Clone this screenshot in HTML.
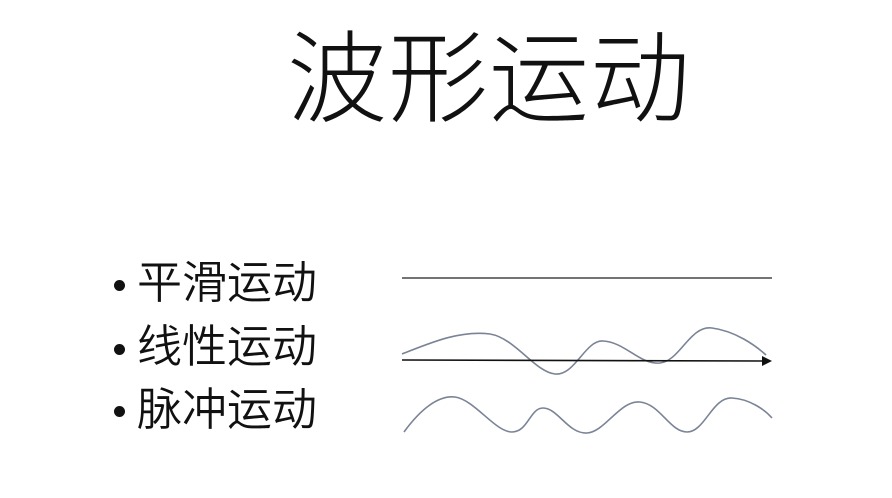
<!DOCTYPE html>
<html><head><meta charset="utf-8"><style>
body{margin:0;width:892px;height:498px;background:#fff;overflow:hidden;position:relative;font-family:"Liberation Sans","Noto Sans CJK SC",sans-serif;color:#111}
.t{position:absolute;line-height:1;white-space:nowrap}
.title{left:287px;top:30px;font-size:100px;letter-spacing:1px;font-weight:300}
.b{font-size:45px;left:137px;font-weight:350}
.dot{position:absolute;width:11px;height:11px;border-radius:50%;background:#111;left:114px}
</style></head><body>
<div class="t title">波形运动</div>
<div class="dot" style="top:280px"></div>
<div class="t b" style="top:260px">平滑运动</div>
<div class="dot" style="top:344px"></div>
<div class="t b" style="top:324px">线性运动</div>
<div class="dot" style="top:406px"></div>
<div class="t b" style="top:387px">脉冲运动</div>
<svg width="892" height="498" style="position:absolute;left:0;top:0">
<line x1="402" y1="278" x2="772" y2="278" stroke="#222" stroke-width="1.3"/>
<path d="M402 354 C430 343,460 330,490 334 C515 338,535 372,555 374 C575 376,585 340,603 341 C625 342,640 365,660 363 C680 361,690 325,712 328 C735 331,755 345,766 355" fill="none" stroke="#7a8496" stroke-width="1.6"/>
<line x1="402" y1="360" x2="764" y2="361" stroke="#111" stroke-width="1.6"/>
<polygon points="772,361 762,356 762,366" fill="#111"/>
<path d="M404 432 C420 410,438 395,455 397 C475 400,495 432,512 432 C528 432,530 408,543 408 C558 408,568 434,587 433 C605 432,620 400,640 402 C660 404,670 432,687 432 C705 432,712 397,732 398 C750 399,765 410,772 418" fill="none" stroke="#7a8496" stroke-width="1.6"/>
</svg>
</body></html>
